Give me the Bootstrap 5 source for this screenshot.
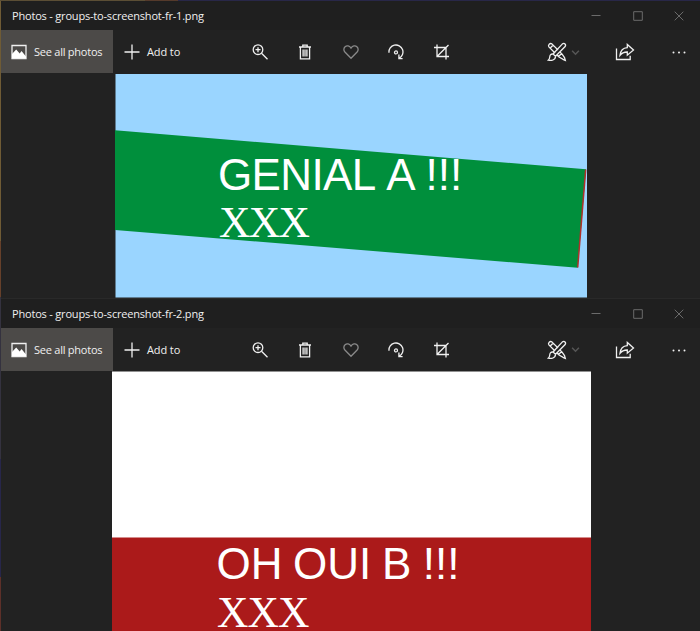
<!DOCTYPE html>
<html lang="en">
<head>
<meta charset="utf-8">
<meta name="viewport" content="width=device-width, initial-scale=1">
<title>Photos</title>
<link href="https://cdn.jsdelivr.net/npm/bootstrap@5.3.0/dist/css/bootstrap.min.css" rel="stylesheet">
<style>
body{width:700px;height:631px;background:#222;color:#f0f0f0;font-family:"Open Sans","Noto Sans",sans-serif;font-size:11px;line-height:1}
.desk-edge{width:1px;background:linear-gradient(#6f5b35 0 240px,#66402a 240px 296px,#34323f 296px 458px,#27264a 458px 576px,#5d3029 576px)}
.desk-top{height:1px;background:linear-gradient(90deg,#5b4e35 0 145px,#553a2b 145px 178px,#282748 178px)}
.btn-reset{border:0;background:none;color:inherit;padding:0;border-radius:0}
.win-one{height:297px}
.titlebar{height:29px;background:#1f1f1f;padding-left:11px}
.win-two .titlebar{height:30px;border-top:1px solid #292929}
.caption-text{font-size:11px;letter-spacing:-.19px;white-space:pre}
.win-two .caption-text{padding-bottom:1px}
.toolbar{height:44px;background:#222}
.win-two .toolbar{height:43px}
.see-all{width:112px;height:43px;background:#4c4a48;padding-left:10px;gap:7px}
.add-to{width:124px;padding-left:11px;gap:7px}
.label{white-space:pre;letter-spacing:-.24px}
.add-to .label{padding-bottom:1px;letter-spacing:-.1px}
.win-two .label{padding-bottom:1px}
.tool{width:45.5px}
.tool-edit{width:47px;padding-left:3px}
.tool-share{width:67px}
.tool-more{width:42px}
.wbtn{width:41.5px;color:#6b6b6b}
svg{display:block;flex:none}
.ico{fill:none;stroke:currentColor;stroke-width:1.3}
.wbtn .ico{stroke-width:1}
.photo-a{margin-left:114px}
.photo-b{margin-left:110.5px}
.sans{font-family:"Liberation Sans",Arial,sans-serif;fill:#fff;white-space:pre}
.serif{font-family:"Liberation Serif","Times New Roman",serif;fill:#fff}
</style>
<script src="https://cdn.jsdelivr.net/npm/bootstrap@5.3.0/dist/js/bootstrap.bundle.min.js"></script>
</head>
<body class="overflow-hidden">
<svg width="0" height="0" class="position-absolute" aria-hidden="true">
  <symbol id="i-photo" viewBox="0 0 16 16"><path d="M1 1.500h14v13H1z"/><path d="M1 14V10l4.200-4.500 3.500 4 1.800-2.500 4.500 5.500V14z" fill="#fff" stroke="none"/></symbol>
  <symbol id="i-plus" viewBox="0 0 16 16"><path d="M8 .5v15M.5 8h15"/></symbol>
  <symbol id="i-zoom" viewBox="0 0 16 16"><circle cx="6" cy="5.700" r="4.800"/><path d="M6 3.200v5M3.500 5.700h5M9.500 9.200l6 6"/></symbol>
  <symbol id="i-trash" viewBox="0 0 16 16"><path d="M2 3h12M5.800 3V1.200h4.400V3M3.400 3v11.900h9.200V3M6.100 5.400v7M8 5.400v7M9.900 5.400v7"/></symbol>
  <symbol id="i-heart" viewBox="0 0 16 16"><path d="M8 14.200L1.900 8C.4 6.300.6 4 2.100 2.700c1.700-1.400 4.200-1 5.900 1.400C9.700 1.700 12.200 1.300 13.900 2.700c1.500 1.300 1.700 3.600.2 5.300z"/></symbol>
  <symbol id="i-rotate" viewBox="0 0 16 16"><path d="M1 8.800A7 7 0 1 1 11.200 14.200M10.900 10.500v4.100h3.700"/><circle cx="8" cy="8.400" r="1.500"/></symbol>
  <symbol id="i-crop" viewBox="0 0 16 16"><path d="M0 3.500h12v12M3 .5v12h12M3 12.500L14.500 1"/></symbol>
  <symbol id="i-edit" viewBox="0 0 20 20"><path d="M8 11L1.900 4.900C.6 3 3 .6 4.900 1.900L11 8M12 15L17 17.800 18.300 18.400 17.500 15.500 14.900 11.900M3 6.300L6.200 3M11.500 14.500l3.400-3.200M12 15l-2-2M14.900 11.900l-1.800-1.800"/><path d="M6 12L15.200 2.100c2.200-1.800 4.400.5 2.700 2.700L8.500 14.300zM6 12c-2.500-.2-3.200 1.500-3.300 3.300-.1 1.400-.6 2.300-1.500 2.900 3 .7 7.300.1 7.300-3.900"/></symbol>
  <symbol id="i-chev" viewBox="0 0 8 8"><path d="M1 2.500l3 3 3-3"/></symbol>
  <symbol id="i-share" viewBox="0 0 20 18"><path d="M1.500 5.500v11h13.700v-3.800M5 12.400C5.500 7.500 7.700 5 12.300 4.700V1.400L18.500 7l-6.200 5.200V9C9 8.900 7 9.800 5 12.400z"/></symbol>
  <symbol id="i-more" viewBox="0 0 16 16"><g fill="currentColor" stroke="none"><circle cx="2.500" cy="8.500" r="1"/><circle cx="8" cy="8.500" r="1"/><circle cx="13.500" cy="8.500" r="1"/></g></symbol>
  <symbol id="i-min" viewBox="0 0 10 10"><path d="M.5 4.500h9"/></symbol>
  <symbol id="i-max" viewBox="0 0 10 10"><path d="M.7.700h8.600v8.600H.7z"/></symbol>
  <symbol id="i-close" viewBox="0 0 10 10"><path d="M.7.700l8.600 8.600M9.300.700L.7 9.300"/></symbol>
</svg>

<div class="desk-top"></div>
<div class="d-flex h-100">
  <div class="desk-edge flex-shrink-0"></div>
  <main class="flex-grow-1">
    <section class="win-one">
      <header class="titlebar d-flex align-items-center">
        <span class="caption-text">Photos - groups-to-screenshot-fr-1.png</span>
        <div class="d-flex ms-auto h-100 align-items-center">
          <span class="wbtn d-flex justify-content-center"><svg class="ico" width="10" height="10"><use href="#i-min"/></svg></span>
          <span class="wbtn d-flex justify-content-center"><svg class="ico" width="10" height="10"><use href="#i-max"/></svg></span>
          <span class="wbtn d-flex justify-content-center"><svg class="ico" width="10" height="10"><use href="#i-close"/></svg></span>
        </div>
      </header>
      <nav class="toolbar d-flex">
        <button class="btn-reset see-all d-flex align-items-center"><svg class="ico" width="16" height="16"><use href="#i-photo"/></svg><span class="label">See all photos</span></button>
        <button class="btn-reset add-to d-flex align-items-center"><svg class="ico" width="16" height="16"><use href="#i-plus"/></svg><span class="label">Add to</span></button>
        <button class="btn-reset tool d-flex align-items-center justify-content-center"><svg class="ico" width="16" height="16"><use href="#i-zoom"/></svg></button>
        <button class="btn-reset tool d-flex align-items-center justify-content-center"><svg class="ico" width="16" height="16"><use href="#i-trash"/></svg></button>
        <button class="btn-reset tool d-flex align-items-center justify-content-center opacity-50"><svg class="ico" width="16" height="16"><use href="#i-heart"/></svg></button>
        <button class="btn-reset tool d-flex align-items-center justify-content-center"><svg class="ico" width="16" height="16"><use href="#i-rotate"/></svg></button>
        <button class="btn-reset tool d-flex align-items-center justify-content-center"><svg class="ico" width="16" height="16"><use href="#i-crop"/></svg></button>
        <div class="d-flex ms-auto">
          <button class="btn-reset tool-edit d-flex align-items-center gap-1"><svg class="ico" width="20" height="20"><use href="#i-edit"/></svg><svg class="ico opacity-25" width="9" height="9"><use href="#i-chev"/></svg></button>
          <button class="btn-reset tool-share d-flex align-items-center justify-content-center"><svg class="ico" width="20" height="18"><use href="#i-share"/></svg></button>
          <button class="btn-reset tool-more d-flex align-items-center justify-content-center"><svg class="ico" width="16" height="16"><use href="#i-more"/></svg></button>
        </div>
      </nav>
      <svg class="photo-a" width="472" height="224" viewBox="115 74 472 224">
        <path fill="#9ad5ff" d="M115.500 74H587v223.500H115.500z"/>
        <path fill="#008f3c" d="M115 130.300L586 169.300 577.700 267.700 115 230z"/>
        <path d="M585.700 169.500L577.700 267.500" stroke="#b0302a" stroke-width="1.500"/>
        <text class="sans" y="190" font-size="44"><tspan x="218" textLength="156.500">GENIAL</tspan> <tspan x="386.300">A</tspan> <tspan x="425.500">!!!</tspan></text>
        <text class="serif" x="219" y="237" font-size="43.500" textLength="91">XXX</text>
      </svg>
    </section>
    <section class="win-two">
      <header class="titlebar d-flex align-items-center">
        <span class="caption-text">Photos - groups-to-screenshot-fr-2.png</span>
        <div class="d-flex ms-auto h-100 align-items-center">
          <span class="wbtn d-flex justify-content-center"><svg class="ico" width="10" height="10"><use href="#i-min"/></svg></span>
          <span class="wbtn d-flex justify-content-center"><svg class="ico" width="10" height="10"><use href="#i-max"/></svg></span>
          <span class="wbtn d-flex justify-content-center"><svg class="ico" width="10" height="10"><use href="#i-close"/></svg></span>
        </div>
      </header>
      <nav class="toolbar d-flex">
        <button class="btn-reset see-all d-flex align-items-center"><svg class="ico" width="16" height="16"><use href="#i-photo"/></svg><span class="label">See all photos</span></button>
        <button class="btn-reset add-to d-flex align-items-center"><svg class="ico" width="16" height="16"><use href="#i-plus"/></svg><span class="label">Add to</span></button>
        <button class="btn-reset tool d-flex align-items-center justify-content-center"><svg class="ico" width="16" height="16"><use href="#i-zoom"/></svg></button>
        <button class="btn-reset tool d-flex align-items-center justify-content-center"><svg class="ico" width="16" height="16"><use href="#i-trash"/></svg></button>
        <button class="btn-reset tool d-flex align-items-center justify-content-center opacity-50"><svg class="ico" width="16" height="16"><use href="#i-heart"/></svg></button>
        <button class="btn-reset tool d-flex align-items-center justify-content-center"><svg class="ico" width="16" height="16"><use href="#i-rotate"/></svg></button>
        <button class="btn-reset tool d-flex align-items-center justify-content-center"><svg class="ico" width="16" height="16"><use href="#i-crop"/></svg></button>
        <div class="d-flex ms-auto">
          <button class="btn-reset tool-edit d-flex align-items-center gap-1"><svg class="ico" width="20" height="20"><use href="#i-edit"/></svg><svg class="ico opacity-25" width="9" height="9"><use href="#i-chev"/></svg></button>
          <button class="btn-reset tool-share d-flex align-items-center justify-content-center"><svg class="ico" width="20" height="18"><use href="#i-share"/></svg></button>
          <button class="btn-reset tool-more d-flex align-items-center justify-content-center"><svg class="ico" width="16" height="16"><use href="#i-more"/></svg></button>
        </div>
      </nav>
      <svg class="photo-b" width="479" height="260" viewBox="111.500 371 479 260">
        <path fill="#fff" d="M111.500 371.400h479v167h-479z"/>
        <path fill="#ab1a1a" d="M111.500 537.500h479V631h-479z"/>
        <text class="sans" y="579" font-size="44"><tspan x="216">OH</tspan> <tspan x="292.500">OUI</tspan> <tspan x="381.500">B</tspan> <tspan x="422.300">!!!</tspan></text>
        <text class="serif" x="216.500" y="627.200" font-size="43.500" textLength="92.500">XXX</text>
      </svg>
    </section>
  </main>
</div>
</body>
</html>
